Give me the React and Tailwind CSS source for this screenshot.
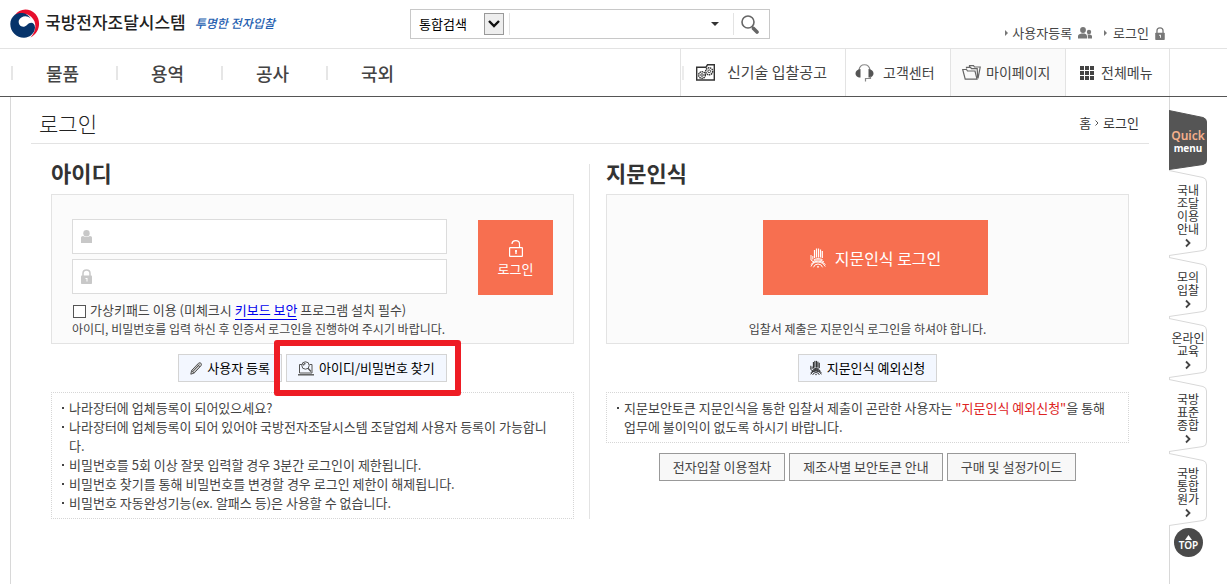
import { useState } from 'react'

const MENUS = ['물품', '용역', '공사', '국외']

const QUICK_LINKS = [
  { lines: ['국내', '조달', '이용', '안내'], height: 86 },
  { lines: ['모의', '입찰'], height: 60 },
  { lines: ['온라인', '교육'], height: 60 },
  { lines: ['국방', '표준', '종합'], height: 73 },
  { lines: ['국방', '통합', '원가'], height: 73 },
]

const LOGIN_NOTES = [
  '나라장터에 업체등록이 되어있으세요?',
  '나라장터에 업체등록이 되어 있어야 국방전자조달시스템 조달업체 사용자 등록이 가능합니다.',
  '비밀번호를 5회 이상 잘못 입력할 경우 3분간 로그인이 제한됩니다.',
  '비밀번호 찾기를 통해 비밀번호를 변경할 경우 로그인 제한이 해제됩니다.',
  '비밀번호 자동완성기능(ex. 알패스 등)은 사용할 수 없습니다.',
]

const GUIDES = ['전자입찰 이용절차', '제조사별 보안토큰 안내', '구매 및 설정가이드']

function GovLogo() {
  return (
    <svg width="30" height="30" viewBox="0 0 30 30" aria-hidden="true">
      <path d="M5 6C9 -.5 19 -2 25.500 5C31.500 12 30 23.500 20.500 28.500C25 23.500 26.500 18 24.500 12.500C21.500 5.500 14 3 5 6Z" fill="#e60f2d" />
      <path d="M4.800 5.800C10.500 2.200 18 4 20.500 9.500C17 5.500 10.500 7 8.800 11.500C7.800 16.500 13 20 17 16C20.500 11.800 25 13.800 25 18.500C24.800 24 20.300 28.600 14 28.700C6.500 28.700 .3 22.800 .3 15C.3 11.500 2 8 4.800 5.800Z" fill="#07346b" />
    </svg>
  )
}

function PalmIcon({ width = 16, height = 20 }) {
  return (
    <svg width={width} height={height} viewBox="0 0 16 20" fill="none" stroke="currentColor" aria-hidden="true">
      <path d="M4.500 2V10M6.500 .5V9.500M8.500 .5V9.500M10.500 1.500V9.500M12.300 3V10" strokeWidth="1.200" />
      <path d="M1 7V12L3 13.500M2.800 8V11.500" strokeWidth="1" />
      <path d="M4 11.500Q8 9.500 12.500 11.500M2.500 14Q8 9.500 14 14M.8 16.500Q8 9.500 15.500 16.500M1 18.500Q3 13.800 8 14T15.300 18.500M3.500 19.300Q4.500 16 8 16T12.500 19.300" strokeWidth="1" />
      <circle cx="8" cy="18.800" r=".9" fill="currentColor" stroke="none" />
    </svg>
  )
}

function PadlockIcon({ className }) {
  return (
    <svg width="11" height="15" viewBox="0 0 11 15" className={className} aria-hidden="true">
      <path d="M2 7V4.200C2 -.2 9 -.2 9 4.200V7" fill="none" stroke="currentColor" strokeWidth="1.500" />
      <rect y="6.500" width="11" height="8.500" rx=".8" fill="currentColor" />
      <path d="M4.500 9h2v3.500h-1V10h-1z" fill="#fff" />
    </svg>
  )
}

function GearFolderIcon() {
  return (
    <svg width="19" height="17" viewBox="0 0 19 17" fill="none" stroke="#333" aria-hidden="true">
      <path d="M.7 16V3.200H10L11.500 .8H18.300V16Z" strokeWidth="1.400" />
      <circle cx="6" cy="11" r="3.300" strokeWidth="1.500" strokeDasharray="1.500 .6" />
      <circle cx="6" cy="11" r="1.300" strokeWidth=".9" />
      <circle cx="13.200" cy="7.300" r="3.500" strokeWidth="1.500" strokeDasharray="1.500 .6" />
      <circle cx="13.200" cy="7.300" r="1.400" strokeWidth=".9" />
    </svg>
  )
}

function HeadsetIcon() {
  return (
    <svg width="19" height="18" viewBox="0 0 19 18" fill="none" aria-hidden="true">
      <path d="M4 6C5 -1 14 -1 15 6" stroke="#888" strokeWidth="1.200" />
      <path d="M5.500 5V13.500C2 13.500 .5 11.500 .5 9.200S2.500 5.500 5.500 5ZM13.500 5V13.500C17 13.500 18.500 11.500 18.500 9.200S16.500 5.500 13.500 5Z" fill="#555" />
      <path d="M15.500 12.500V14.500H10.500V17.500" stroke="#888" strokeWidth="1.200" />
    </svg>
  )
}

function FoldersIcon() {
  return (
    <svg width="19" height="15" viewBox="0 0 19 15" fill="none" stroke="#666" strokeWidth="1.200" aria-hidden="true">
      <path d="M3.200 14.200L.7 4.500H4.500L5.500 6H13L15 14.200Z" />
      <path d="M4.500 3.500V2.300H8.500L9.500 3.700H15.200L15.700 13M7.500 1.800V.7H11.500L12.500 2H18.200L16 13.500" />
    </svg>
  )
}

function GridIcon() {
  return (
    <svg width="14" height="14" viewBox="0 0 14 14" fill="#444" aria-hidden="true">
      {[0, 5, 10].map((y) => [0, 5, 10].map((x) => <rect key={`${x}-${y}`} x={x} y={y} width="4" height="4" />))}
    </svg>
  )
}

function Header() {
  return (
    <header className="flex h-[49px] border-b border-[#e3e3e3] pr-[62px]">
      <a href="#" className="flex w-[410px] items-start gap-[5px] pl-[10px] pt-[9px]">
        <GovLogo />
        <span className="text-[17px] font-medium leading-[26px] text-[#222]">국방전자조달시스템</span>
        <span className="pl-[4px] text-[12px] font-medium italic leading-[28px] text-[#2560b0]">투명한 전자입찰</span>
      </a>

      <form className="mt-[9px] flex h-[30px] w-[360px] items-center border border-[#c8c8c8]" onSubmit={(e) => e.preventDefault()}>
        <div className="relative ml-[7px] w-[86px]">
          <select aria-label="검색 구분" className="block h-[22px] w-full appearance-none bg-white pl-px text-[13px] leading-[20px] text-black">
            <option>통합검색</option>
          </select>
          <span className="pointer-events-none absolute right-0 top-0 flex h-[22px] w-[20px] items-center justify-center border border-[#999] bg-[#eee]">
            <svg width="12" height="8" viewBox="0 0 12 8" fill="none" stroke="#111" strokeWidth="2.400" aria-hidden="true"><path d="M1 1l5 5 5-5" /></svg>
          </span>
        </div>
        <input aria-label="검색어" className="ml-[5px] h-[22px] min-w-0 flex-1 border-l border-[#e3e3e3] px-2 text-[13px] outline-none" />
        <button type="button" aria-label="검색어 목록" className="flex h-[22px] w-[36px] items-center justify-center">
          <svg width="8" height="4" viewBox="0 0 8 4" fill="#333" aria-hidden="true"><path d="M0 0h8L4 4z" /></svg>
        </button>
        <button aria-label="검색" className="flex h-[22px] w-[36px] items-center border-l border-[#e3e3e3] pl-[7px]">
          <svg width="18" height="19" viewBox="0 0 18 19" fill="none" stroke="#666" aria-hidden="true">
            <circle cx="7" cy="7" r="6" strokeWidth="1.600" />
            <path d="M11 11.500l2 2" strokeWidth="1.600" />
            <path d="M12.500 13.500l3.500 3.500" strokeWidth="3.600" strokeLinecap="round" />
          </svg>
        </button>
      </form>

      <div className="ml-auto flex items-end gap-[12px] pb-[5px] text-[13px] leading-[20px] text-[#444]">
        <a href="#" className="flex items-center gap-[4px]">
          <svg width="3" height="6" viewBox="0 0 3 6" fill="#777" aria-hidden="true"><path d="M0 0l3 3-3 3z" /></svg>
          사용자등록
          <svg width="14" height="12" viewBox="0 0 14 12" fill="#777" className="ml-[2px]" aria-hidden="true">
            <circle cx="5" cy="3" r="2.900" />
            <path d="M0 11.500V9Q0 7.300 3.500 6.500H6.500Q9 7.300 9 9V11.500Z" />
            <circle cx="11" cy="5" r="2.200" />
            <path d="M9.800 11.500V8.200L9.300 7.400H12Q14 8 14 9V11.500Z" />
          </svg>
        </a>
        <a href="#" className="flex items-center gap-[6px]">
          <svg width="3" height="6" viewBox="0 0 3 6" fill="#777" aria-hidden="true"><path d="M0 0l3 3-3 3z" /></svg>
          로그인
          <PadlockIcon className="h-[13px] w-[10px] text-[#777]" />
        </a>
      </div>
    </header>
  )
}

function Nav() {
  return (
    <nav className="flex h-[48px] justify-between border-b border-[#555] pl-[11px] pr-[57px] text-[#444]">
      <ul className="flex items-center">
        {MENUS.map((m) => (
          <li key={m} className="relative w-[105px] pl-[35px]">
            <span className="absolute left-0 top-[6px] h-[14px] w-[2px] bg-[#e6e6e6]" />
            <a href="#" className="text-[18px] font-medium leading-[26px]">{m}</a>
          </li>
        ))}
      </ul>
      <div className="flex text-[14px]">
        <a href="#" className="relative flex w-[165px] items-center gap-[12px] border-l border-[#e3e3e3] pl-[15px] text-[15px]">
          <span className="absolute left-[1px] top-[17px] h-[14px] w-[2px] bg-[#ececec]" />
          <GearFolderIcon />신기술 입찰공고
        </a>
        <a href="#" className="flex w-[105px] items-center gap-[9px] border-l border-[#e3e3e3] pl-[9px]"><HeadsetIcon />고객센터</a>
        <a href="#" className="flex w-[115px] items-center gap-[5px] border-l border-[#e3e3e3] bg-[#fafafa] pl-[11px]"><FoldersIcon />마이페이지</a>
        <a href="#" className="flex w-[105px] items-center gap-[7px] border-x border-[#e3e3e3] pl-[14px]"><GridIcon />전체메뉴</a>
      </div>
    </nav>
  )
}

function Notes({ children }) {
  return (
    <ul className="mt-[10px] border border-dotted border-[#d6d6d6] px-[17px] pb-[6px] pt-[5px] text-[13px] leading-[19px] text-[#444]">
      {children}
    </ul>
  )
}

function Note({ children }) {
  return (
    <li className="relative">
      <span className="absolute -left-[7px] top-[9px] size-[2px] bg-[#444]" />
      {children}
    </li>
  )
}

function SmallButton({ icon, children }) {
  return (
    <button className="flex h-[28px] items-center gap-[5px] whitespace-nowrap border border-[#d4d4d4] bg-[#f3f7ff] px-[11px] text-[13px] text-black">
      {icon}
      {children}
    </button>
  )
}

function IdLogin() {
  const [virtualKeypad, setVirtualKeypad] = useState(false)

  return (
    <section className="min-w-0 flex-1 border-r border-[#e3e3e3] pr-[15px]">
      <h2 className="mb-[14px] text-[22px] font-bold leading-[16px] text-[#333]">아이디</h2>
      <form className="border border-[#e3e3e3] bg-[#fbfbfb] px-[20px] pb-[5px] pt-[24px]" onSubmit={(e) => e.preventDefault()}>
        <div className="flex items-end gap-[31px]">
          <div className="flex min-w-0 flex-1 flex-col gap-[5px] pb-px">
            <label className="flex h-[35px] items-center border border-[#dcdcdc] bg-white pl-[8px]">
              <svg width="11" height="13" viewBox="0 0 11 13" fill="#c8c8c8" aria-hidden="true">
                <circle cx="5.500" cy="3.200" r="3.200" />
                <path d="M0 13V7.500Q0 6 2 6Q5.500 8 9 6Q11 6 11 7.500V13Z" />
              </svg>
              <input type="text" aria-label="아이디" className="h-full min-w-0 flex-1 px-2 text-[13px] outline-none" />
            </label>
            <label className="flex h-[35px] items-center border border-[#dcdcdc] bg-white pl-[8px]">
              <PadlockIcon className="text-[#c8c8c8]" />
              <input type="password" aria-label="비밀번호" className="h-full min-w-0 flex-1 px-2 text-[13px] outline-none" />
            </label>
          </div>
          <button className="flex size-[75px] flex-col items-center justify-center gap-[2px] bg-[#f76f50] pt-[3px] text-[13px] leading-[20px] text-white">
            <svg width="14" height="17" viewBox="0 0 14 17" fill="none" stroke="currentColor" strokeWidth="1.200" aria-hidden="true">
              <rect x=".6" y="7.600" width="12.800" height="8.800" rx=".5" />
              <path d="M3 4C3 -.5 10.500 -.5 10.500 4V7.500" />
              <path d="M7 10v4M6 11h2" strokeWidth="1.400" />
            </svg>
            로그인
          </button>
        </div>
        <div className="mt-[5px] flex items-center text-[13px] leading-[19px] text-[#444]">
          <input
            id="keypad"
            type="checkbox"
            checked={virtualKeypad}
            onChange={(e) => setVirtualKeypad(e.target.checked)}
            className="ml-px mr-[4px] mt-[3px] size-[13px] appearance-none border border-[#555] bg-white checked:bg-[#555]"
          />
          <p>
            <label htmlFor="keypad">가상키패드 이용</label> (미체크시{' '}
            <a href="#" className="border-b border-[#0000ee] text-[#0000ee]">키보드 보안</a> 프로그램 설치 필수)
          </p>
        </div>
        <p className="text-[12px] leading-[19px] text-[#444]">아이디, 비밀번호를 입력 하신 후 인증서 로그인을 진행하여 주시기 바랍니다.</p>
      </form>

      <div className="mt-[10px] flex justify-center gap-[4px]">
        <SmallButton
          icon={
            <svg width="12" height="13" viewBox="0 0 12 13" fill="none" stroke="#555" aria-hidden="true">
              <path d="M.8 12.200L1.600 8.500L8.500 1.200Q10 0 11.200 1.500Q12 2.700 11 3.700L4.200 11Z" fill="#ccc" />
              <path d="M2.800 9.500L9.300 2.600M1.600 8.500L4.200 11M7.500 2.500L9.800 5" />
            </svg>
          }
        >
          사용자 등록
        </SmallButton>
        <div className="relative">
          <SmallButton
            icon={
              <svg width="16" height="15" viewBox="0 0 16 15" fill="none" stroke="#555" aria-hidden="true">
                <path d="M4 3.500H1.500V12H14V3.500H11.500" />
                <path d="M0 13.800H16" strokeWidth="1.400" />
                <circle cx="7.500" cy="4.500" r="3.700" fill="#f3f7ff" />
                <path d="M5.500 4.500A2 2 0 0 1 7.500 2.500M10 7.200L13 10.500" strokeWidth="1.300" />
              </svg>
            }
          >
            아이디/비밀번호 찾기
          </SmallButton>
          <span className="pointer-events-none absolute -inset-y-[14px] -left-[12px] -right-[14px] rounded-[3px] border-[6px] border-[#ee1c24]" />
        </div>
      </div>

      <Notes>
        {LOGIN_NOTES.map((n) => <Note key={n}>{n}</Note>)}
      </Notes>
    </section>
  )
}

function FingerprintLogin() {
  return (
    <section className="min-w-0 flex-1 pl-[16px]">
      <h2 className="mb-[14px] text-[22px] font-bold leading-[16px] text-[#333]">지문인식</h2>
      <div className="flex flex-col items-center border border-[#e3e3e3] bg-[#fbfbfb] pb-[5px] pt-[25px]">
        <button className="ml-[16px] flex h-[75px] w-[225px] items-center justify-center gap-[9px] bg-[#f76f50] text-[16px] text-white">
          <PalmIcon />지문인식 로그인
        </button>
        <p className="mt-[24px] text-[12px] leading-[19px] text-[#444]">입찰서 제출은 지문인식 로그인을 하셔야 합니다.</p>
      </div>

      <div className="mt-[10px] flex justify-center">
        <SmallButton icon={<PalmIcon width={12} height={16} />}>지문인식 예외신청</SmallButton>
      </div>

      <Notes>
        <Note>
          지문보안토큰 지문인식을 통한 입찰서 제출이 곤란한 사용자는 <span className="text-[#dd2222]">"지문인식 예외신청"</span>을 통해 업무에 불이익이 없도록 하시기 바랍니다.
        </Note>
      </Notes>

      <div className="mt-[10px] flex justify-center gap-[4px]">
        {GUIDES.map((g) => (
          <button key={g} className="h-[28px] whitespace-nowrap border border-[#999] bg-[#f8f8f8] px-[13px] text-[13px] text-[#444]">{g}</button>
        ))}
      </div>
    </section>
  )
}

// slanted tab outline, drawn behind the tab's text
function TabShape({ height, fill, stroke }) {
  return (
    <svg className="absolute left-0 top-0" width="38" height={height} viewBox={`0 0 38 ${height}`} aria-hidden="true">
      <path d={`M0 .5L34 7.500Q37.500 8.500 37.500 12V${height - 10}Q37.500 ${height - 6} 34 ${height - 5.5}L0 ${height - 0.5}`} fill={fill} stroke={stroke} />
    </svg>
  )
}

function QuickMenu() {
  return (
    <aside className="-ml-px w-[58px] shrink-0 pt-[13px]">
      <div className="relative h-[60px] w-[38px] pt-[19px] text-center font-['Noto_Sans']">
        <TabShape height={60} fill="#555" stroke="#555" />
        <p className="relative text-[12px] font-semibold leading-[13px] text-[#f6b08c]">Quick</p>
        <p className="relative text-[10px] font-bold leading-[13px] text-white">menu</p>
      </div>
      {QUICK_LINKS.map(({ lines, height }) => (
        <a key={lines.join('')} href="#" className="relative mb-px flex w-[38px] flex-col items-center pb-[6px] pt-[13px] text-[12px] leading-[13px] text-[#333]">
          <TabShape height={height} fill="#fff" stroke="#d8d8d8" />
          {lines.map((l) => <span key={l} className="relative whitespace-nowrap">{l}</span>)}
          <svg className="relative h-[15px] w-[6px]" viewBox="0 0 6 15" fill="none" stroke="#444" strokeWidth="1.800" aria-hidden="true"><path d="M1 4.500l3.500 3.500L1 11.500" /></svg>
        </a>
      ))}
      <a href="#" className="ml-[5px] mt-[2px] flex size-[29px] flex-col items-center justify-center rounded-full bg-[#4a4a4a] font-['Noto_Sans'] text-[10px] font-semibold leading-[11px] text-white">
        <svg width="7" height="5" viewBox="0 0 7 5" fill="currentColor" aria-hidden="true"><path d="M3.500 0L7 5H0z" /></svg>
        TOP
      </a>
    </aside>
  )
}

export default function App() {
  return (
    <div className="flex min-h-screen min-w-[1100px] flex-col bg-white font-['Noto_Sans_CJK_KR',sans-serif]">
      <Header />
      <Nav />
      <div className="flex flex-1 pl-[10px]">
        <main className="min-w-0 flex-1 border-x border-[#d8d8d8] px-[20px]">
          <div className="flex h-[47px] items-center justify-between border-b border-[#e3e3e3] pl-[8px] pr-[10px] pt-[6px]">
            <h1 className="text-[21px] font-light leading-[30px] text-[#222]">로그인</h1>
            <div className="flex items-center gap-[4px] text-[13px] text-[#333]">
              <a href="#">홈</a>
              <svg width="4" height="6" viewBox="0 0 4 6" fill="none" stroke="#555" aria-hidden="true"><path d="M.5 .5L3 3L.5 5.500" /></svg>
              <span>로그인</span>
            </div>
          </div>
          <div className="flex px-[20px] py-[20px]">
            <IdLogin />
            <FingerprintLogin />
          </div>
        </main>
        <QuickMenu />
      </div>
    </div>
  )
}
